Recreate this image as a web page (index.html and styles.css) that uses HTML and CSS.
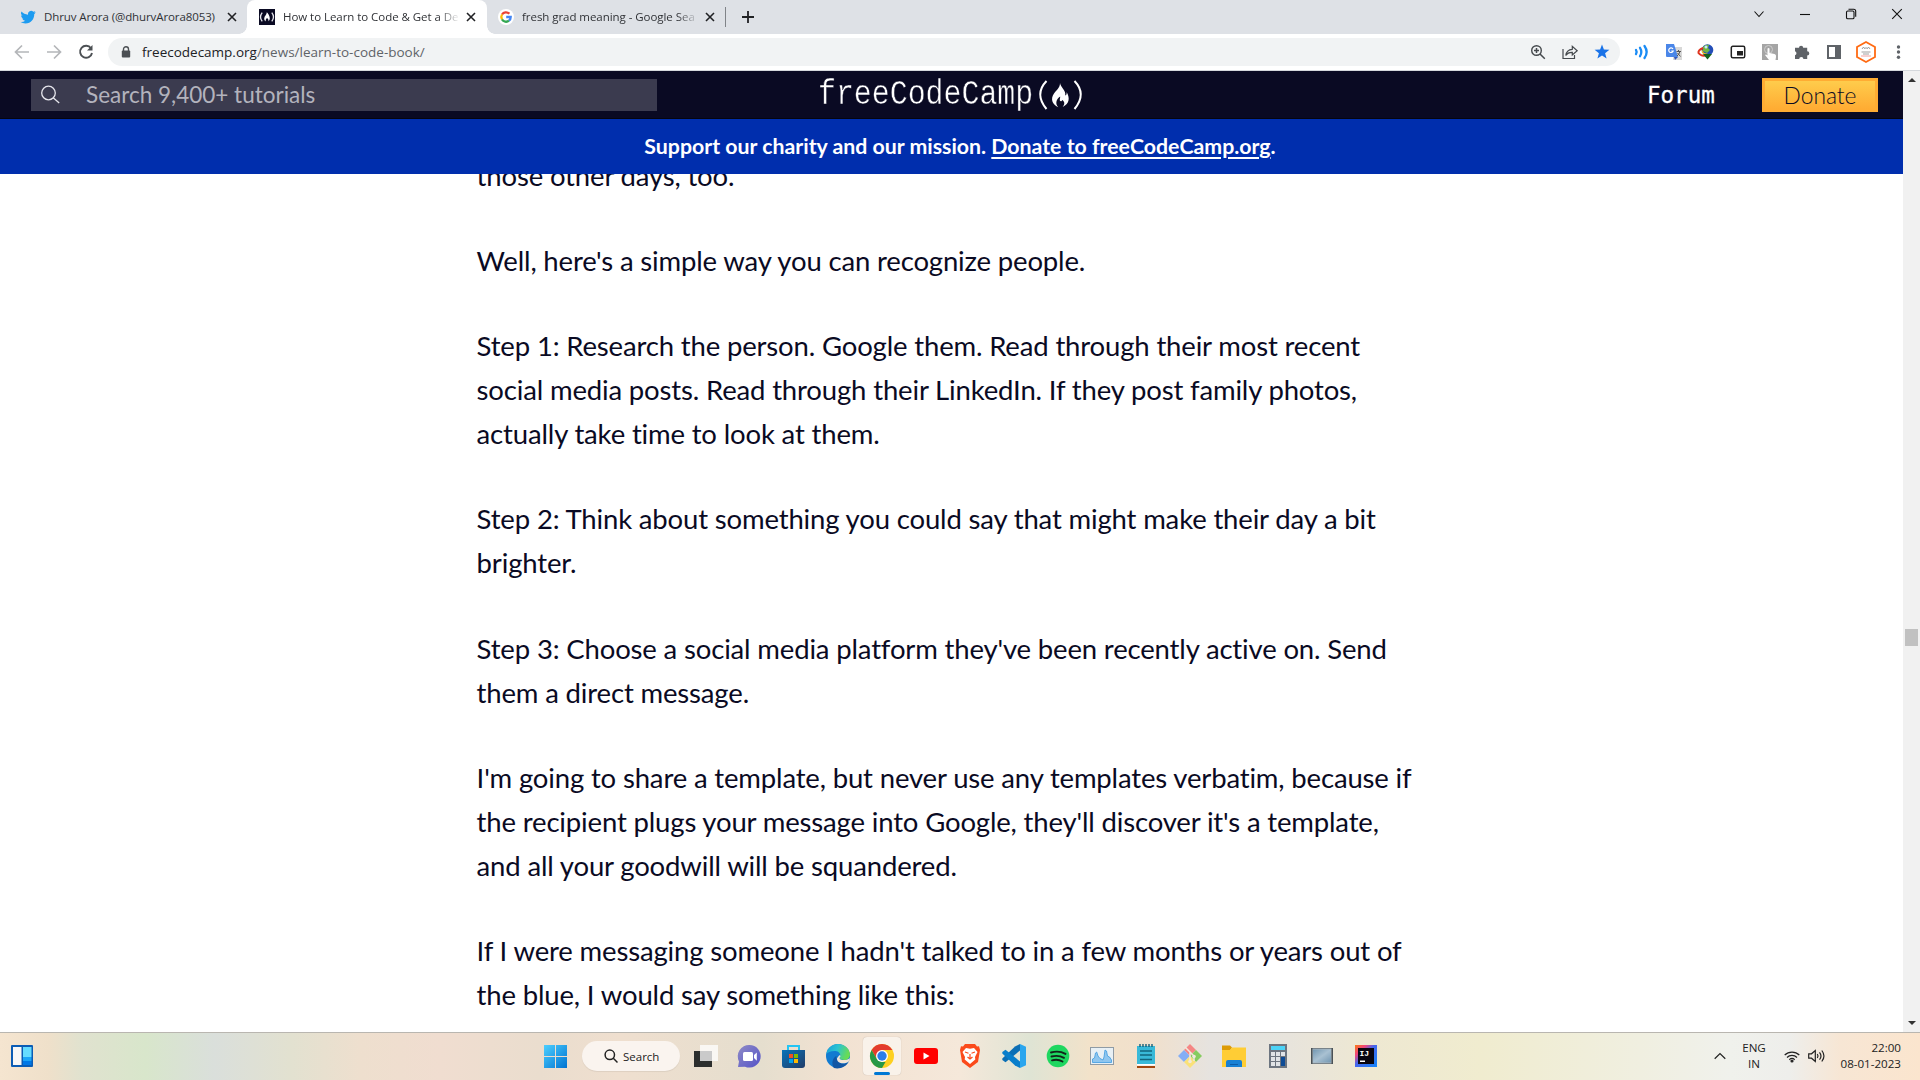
FILE: index.html
```html
<!DOCTYPE html>
<html lang="en">
<head>
<meta charset="utf-8">
<title>How to Learn to Code</title>
<link rel="stylesheet" href="styles.css">
</head>
<body>
<div class="tabstrip">
  <div class="tab tab-first">
    <svg class="fav" viewBox="0 0 24 24" fill="#1d9bf0"><path d="M23.6 4.9c-.8.4-1.7.6-2.7.8 1-.6 1.7-1.500 2.100-2.600-.9.500-1.900.9-3 1.100a4.700 4.700 0 0 0-8 4.300C8 8.300 4.700 6.500 2.300 3.800a4.700 4.700 0 0 0 1.500 6.300c-.8 0-1.500-.2-2.100-.6v.1c0 2.300 1.600 4.200 3.800 4.600-.7.2-1.400.2-2.100.1.600 1.900 2.300 3.200 4.400 3.300A9.500 9.500 0 0 1 .9 19.500c2.100 1.300 4.600 2.100 7.200 2.100 8.700 0 13.500-7.200 13.200-13.900.9-.7 1.700-1.600 2.300-2.800z"/></svg>
    <span class="tab-title t1">Dhruv Arora (@dhurvArora8053)</span>
    <svg class="x" viewBox="0 0 10 10"><path d="M1 1l8 8M9 1l-8 8"/></svg>
  </div>
  <div class="tab tab-active">
    <svg class="fav" viewBox="0 0 16 16"><path fill="#0a0a23" d="M0 0h16v16H0z"/><g fill="none" stroke="#e8e8ee" stroke-width="1.300"><path d="M3.200 3.600c-2 2.600-2 6.200 0 8.800M12.800 3.600c2 2.600 2 6.200 0 8.800"/></g><path fill="#fff" d="M7.800 3.300c1.200 1.200 3 3.500 3 6 0 1.400-.6 2.400-1.400 3 .4-1.500-.1-2.500-1.400-3.300-.9.900-1.700 1.800-1.200 3.300-1-.6-1.600-1.500-1.600-2.900 0-2.400 2.600-3.400 2.600-6.100z"/></svg>
    <span class="tab-title t2">How to Learn to Code &amp; Get a De</span>
    <svg class="x" viewBox="0 0 10 10"><path d="M1 1l8 8M9 1l-8 8"/></svg>
  </div>
  <div class="tab tab-last">
    <svg class="fav" viewBox="0 0 16 16"><circle cx="8" cy="8" r="8" fill="#fff"/><g fill="none" stroke-width="2.300"><path stroke="#ea4335" d="M4 5.500A4.700 4.700 0 0 1 11.300 4.700"/><path stroke="#fbbc05" d="M4 10.400a4.800 4.800 0 0 1 0-4.900"/><path stroke="#34a853" d="M4 10.400a4.700 4.700 0 0 0 7 1.300"/><path stroke="#4285f4" d="M8.200 8h4.500c0 1.600-.6 2.800-1.700 3.700"/></g></svg>
    <span class="tab-title t3">fresh grad meaning - Google Sea</span>
    <svg class="x" viewBox="0 0 10 10"><path d="M1 1l8 8M9 1l-8 8"/></svg>
  </div>
  <span class="tab-sep"></span>
  <svg class="newtab" viewBox="0 0 12 12"><path d="M6 0v12M0 6h12"/></svg>
  <div class="wincontrols">
    <svg viewBox="0 0 12 12"><path d="M1.500 3.500L6 8.500l4.500-5"/></svg>
    <svg viewBox="0 0 12 12"><path d="M1 6.500h10"/></svg>
    <svg viewBox="0 0 12 12"><rect x="1.500" y="3" width="7.500" height="7.800" rx="1.300"/><path d="M3.500 1.300h5.200a2 2 0 0 1 2 2v5.400"/></svg>
    <svg viewBox="0 0 12 12"><path d="M1.200 1.200l9.600 9.600M10.800 1.200l-9.600 9.600"/></svg>
  </div>
</div>

<div class="toolbar">
  <div class="nav">
    <svg viewBox="0 0 16 16" class="dim"><path d="M15 8H2M8 1.500L1.500 8 8 14.500"/></svg>
    <svg viewBox="0 0 16 16" class="dim"><path d="M1 8h13M8 1.500L14.500 8 8 14.500"/></svg>
    <svg viewBox="0 0 16 16" class="reload"><path d="M13 4.300A6 6 0 1 0 14 9"/><path d="M14.500 1v5.500H9z" class="tip"/></svg>
  </div>
  <div class="omnibox">
    <svg class="lock" viewBox="0 0 10 12"><path d="M2.500 5V3.200a2.500 2.500 0 0 1 5 0V5" fill="none" stroke="#4c5054" stroke-width="1.400"/><rect x=".8" y="4.500" width="8.400" height="7" rx="1" fill="#4c5054"/></svg>
    <span class="url"><b>freecodecamp.org</b>/news/learn-to-code-book/</span>
    <div class="omni-icons">
      <svg viewBox="0 0 16 16"><circle cx="6.500" cy="6.500" r="4.800"/><path d="M10 10l4.800 4.800M4 6.500h5M6.500 4v5" stroke-width="1.500"/></svg>
      <svg viewBox="0 0 16 16"><path d="M1 5v9.500h11.500V11M10.300 5.300V2.300L15.200 6.800 10.300 11V8.300C7 8.200 5 9.500 3.800 11.500 4.200 8 6.300 5.600 10.300 5.300z" stroke-width="1.200"/></svg>
      <svg viewBox="0 0 16 16"><path fill="#1a73e8" stroke="none" d="M8 .5l1.900 5.100 5.500.2-4.300 3.400 1.500 5.400L8 11.500l-4.600 3.100 1.500-5.400L.6 5.800l5.500-.2z"/></svg>
    </div>
  </div>
  <div class="ext">
    <svg viewBox="0 0 16 16" fill="none" stroke="#1a8cf5" stroke-width="2.300" stroke-linecap="round"><path d="M2 6q1.300 2 0 4M6 3.800q2.600 4.200 0 8.400M10.500 2q4.300 6 0 12"/></svg>
    <svg viewBox="0 0 16 16"><path fill="#d8d8d8" d="M7 3h9v13H7z"/><path fill="#4a86e8" d="M0 0h8l4 13H1a1 1 0 0 1-1-1z"/><path fill="#3456b5" d="M8 13h4l-3 3z"/><path d="M7 5A2.300 2.300 0 1 0 7.200 7H5.300" fill="none" stroke="#fff" stroke-width="1.200"/><path d="M10.500 7.500H15M12.500 6v1.500M14 7.500q-1 3-3 4.500M11.500 9l3 3.500" fill="none" stroke="#555" stroke-width="1"/></svg>
    <svg viewBox="0 0 16 16"><circle cx="9.500" cy="6" r="5.800" fill="#244eb8"/><path fill="#72b844" d="M5 3q3-3 6-2l-1 3 2 2-3 3-4-2z"/><circle cx="8" cy="3" r="1.500" fill="#c9e8ff"/><path d="M5 4Q0 6 .5 9q3 4 9 2" fill="none" stroke="#df351f" stroke-width="2"/><path d="M4.500 6.500q-1 3 5 4" fill="none" stroke="#f2c21a" stroke-width="1.500"/><path fill="#15631d" d="M5 10h9l-4.500 5.500z"/></svg>
    <svg viewBox="0 0 16 16"><rect x="1.300" y="2.300" width="13.400" height="11.400" rx="1.500" fill="none" stroke="#222" stroke-width="1.500"/><path fill="#222" d="M7 7h6v4.500H7z"/></svg>
    <svg viewBox="0 0 16 16"><path fill="#a5a5a5" d="M0 0h16v16H0z"/><circle cx="6.500" cy="5.500" r="4" fill="none" stroke="#ccc"/><path fill="#fff" d="M5.500 4.500q1.200-1 2 0V9l5 1q2 .4 1.500 3l-.5 3H7l-4-5q1-1 2.500.5z"/></svg>
    <svg viewBox="0 0 16 16" fill="#5f6368"><path d="M1 3.800h4a2.100 2.100 0 1 1 4.200 0h4v3.500a2.100 2.100 0 1 1 0 4.200V15H9.400a2.100 2.100 0 0 0-4.200 0H1v-3.700a2.100 2.100 0 0 0 0-4z"/></svg>
    <svg viewBox="0 0 16 16"><path fill="#5f6368" fill-rule="evenodd" d="M1 1h14v14H1zM3 3v10h6V3z"/></svg>
    <svg class="avatar" viewBox="0 0 22 22"><circle cx="11" cy="11" r="9" fill="#fff"/><path d="M11 1l9 5v10l-9 5-9-5V6z" fill="none" stroke="#ff6b13" stroke-width="1.800"/><path d="M7 8l1.500-2L10 8m1-2v2m1 0l1.500-2L15 8M6.500 11h9M8 13h6" fill="none" stroke="#888" stroke-width=".8"/><path d="M6 15h10" stroke="#e88" stroke-width=".8"/></svg>
    <svg viewBox="0 0 16 16" fill="#5f6368"><circle cx="8.500" cy="3" r="1.700"/><circle cx="8.500" cy="8" r="1.700"/><circle cx="8.500" cy="13.300" r="1.700"/></svg>
  </div>
</div>

<div class="viewport">
  <div class="page">
    <header class="site-header">
      <div class="search">
        <svg viewBox="0 0 20 20"><circle cx="8.500" cy="8" r="6.800"/><path d="M13.200 12.800l6 5.200"/></svg>
        <span>Search 9,400+ tutorials</span>
      </div>
      <div class="logo">
        <span class="logo-text">freeCodeCamp</span>
        <svg viewBox="0 0 46 32"><g fill="none" stroke="#fff" stroke-width="2"><path d="M8.500 2q-12.500 13 0 28M36.500 2q12.500 13 0 28"/></g><path fill="#fff" d="M22 4c.5 4.500 6.300 7.200 5.200 12.500 1.500-.6 1.700-2 1.300-3.500 3.500 5.500 3.300 11.500-3.800 15 2.600-3.300 1.700-5.600-.5-7-.4 1.200-1.300 1.700-2.300.8-.4-1.700.4-2.600.3-4.200-4 2.500-5.200 7.400-2 10.600C14 25 12.300 20 16 14.500 18.500 11 22 9 22 4z"/></svg>
      </div>
      <a class="forum">Forum</a>
      <a class="donate">Donate</a>
    </header>
    <div class="banner"><span>Support our charity and our mission. <u>Donate to freeCodeCamp.org</u>.</span></div>
    <article class="post">
      <p>those other days, too.</p>
      <p>Well, here's a simple way you can recognize people.</p>
      <p>Step 1: Research the person. Google them. Read through their most recent<br>social media posts. Read through their LinkedIn. If they post family photos,<br>actually take time to look at them.</p>
      <p>Step 2: Think about something you could say that might make their day a bit<br>brighter.</p>
      <p>Step 3: Choose a social media platform they've been recently active on. Send<br>them a direct message.</p>
      <p>I'm going to share a template, but never use any templates verbatim, because if<br>the recipient plugs your message into Google, they'll discover it's a template,<br>and all your goodwill will be squandered.</p>
      <p>If I were messaging someone I hadn't talked to in a few months or years out of<br>the blue, I would say something like this:</p>
    </article>
  </div>
  <div class="scrollbar">
    <svg viewBox="0 0 8 4"><path d="M4 0l4 4H0z"/></svg>
    <span class="thumb"></span>
    <svg viewBox="0 0 8 4"><path d="M0 0h8L4 4z"/></svg>
  </div>
</div>

<div class="taskbar">
  <div class="cell widgets"><svg viewBox="0 0 22 22"><rect width="22" height="22" rx="1" fill="#0b5cb5"/><path fill="#f7f7f7" d="M2 2h8.500v18H2z"/><path fill="#66dcff" d="M12 2h8.500v10H12z"/><path fill="#1ba5f8" d="M12 12h8.500v4H12z"/><path fill="#0078e6" d="M12 16h8.500v4H12z"/></svg></div>
  <div class="apps">
    <div class="cell"><svg viewBox="0 0 24 24"><defs><linearGradient id="win" x2="1" y2="1"><stop stop-color="#4ccfff"/><stop offset="1" stop-color="#0073d1"/></linearGradient></defs><path fill="url(#win)" d="M0 1h11v11H0zm12 0h11v11H12zM0 13h11v11H0zm12 0h11v11H12z"/></svg></div>
    <div class="pill"><svg viewBox="0 0 14 14"><circle cx="5.800" cy="5.800" r="4.700"/><path d="M9.300 9.300l4.200 4.200"/></svg><span>Search</span></div>
    <div class="cell"><svg viewBox="0 0 24 24"><path fill="#2c2e2d" d="M0 7h18v16H0z"/><path fill="#fff" fill-opacity=".75" d="M6 1h18v16H6z"/></svg></div>
    <div class="cell"><svg viewBox="0 0 24 24"><defs><linearGradient id="chat" x2="1" y2="1"><stop stop-color="#8f8bc6"/><stop offset="1" stop-color="#5452c8"/></linearGradient></defs><path fill="url(#chat)" d="M11.500 1A11.300 11.300 0 1 1 7 22.700L0 23l1-5.500A11.300 11.300 0 0 1 11.500 1z"/><rect x="5" y="8" width="10" height="9" rx="1.500" fill="#fff"/><path fill="#fff" d="M16 11l2.800-2.500v8.200L16 14z"/></svg></div>
    <div class="cell"><svg viewBox="0 0 24 24"><defs><linearGradient id="store" x2="1" y2="1"><stop stop-color="#0873b9"/><stop offset="1" stop-color="#213c68"/></linearGradient></defs><path d="M6 7V2h11v5" fill="none" stroke="#24c5f4" stroke-width="2"/><path fill="url(#store)" d="M0 6h23v15q0 3-3 3H3q-3 0-3-3z"/><path fill="#f25022" d="M7 10h4v4H7z"/><path fill="#7fba00" d="M12 10h4v4h-4z"/><path fill="#00a4ef" d="M7 15h4v4H7z"/><path fill="#ffb900" d="M12 15h4v4h-4z"/></svg></div>
    <div class="cell"><svg viewBox="0 0 24 24"><defs><linearGradient id="edge" x2="1" y2=".3"><stop stop-color="#159ed9"/><stop offset=".5" stop-color="#2bc3d2"/><stop offset="1" stop-color="#68dc55"/></linearGradient></defs><circle cx="12" cy="12" r="12" fill="#127bd1"/><path fill="url(#edge)" d="M.3 10C1 4.500 6 0 12 0s12 4.800 12 10.500c0 3.500-2.500 5.500-5.500 5.500s-5-1-5-2 .8-1 .8-2.700C14.300 8.500 11.500 7 8.500 7 4.500 7 1.300 8.500.3 10z"/><path fill="#1256a4" d="M8 24C5 20 6.500 13.500 10.500 12c-1 5 4 8.500 9 7.500l3-1.500C20 22.500 14 25.500 8 24z"/><path fill="#f3e5d6" d="M13.300 11.200c2-.2 1.200 1.500.2 2.500-.3 2.500 6 3.500 10.500.5l-1.500 3.500c-5.500 3.500-12 1-11.500-3.500z"/></svg></div>
    <div class="cell active"><svg viewBox="0 0 24 24"><circle cx="12" cy="12" r="12" fill="#fdd021"/><path fill="#e33b2e" d="M1.600 6A12 12 0 0 1 22.400 6H12L6.800 15z"/><path fill="#279847" d="M1.600 6l5.200 9 5.200 3h3.500L12 24A12 12 0 0 1 1.600 6z"/><circle cx="12" cy="12" r="6" fill="#fff"/><circle cx="12" cy="12" r="4.700" fill="#2b7de9"/></svg></div>
    <div class="cell"><svg viewBox="0 0 24 24"><rect y="4" width="24" height="16" rx="3" fill="#f00"/><path fill="#fff" d="M9.500 8.500l6 3.500-6 3.500z"/></svg></div>
    <div class="cell"><svg viewBox="0 0 24 24"><path fill="#fb4a1b" d="M7 0h10l2 2.500 2-.3L22 6l-2 12-8 6-8-6L2 6l1-3.800 2 .3z"/><path fill="#fff" d="M8 4l4 .8L16 4l3.500 4-2.500 5 .3 2.500L12 20l-5.300-4.500L7 13 4.500 8z"/><path d="M7 8l3.500 1.200M17 8l-3.500 1.200M12 10v4M9.500 13l2.500 2 2.500-2" fill="none" stroke="#fb4a1b" stroke-width="1.200"/></svg></div>
    <div class="cell"><svg viewBox="0 0 24 24"><path fill="#0b6fb5" d="M18 0v6.500L3.500 18.300.3 16v-1.500L13 2.500z"/><path fill="#087ecb" d="M.3 8L3.500 5.700 18 17.500V24l-5-2.500L.3 9.500z"/><path fill="#2aa6ee" d="M18 0l6 2.800v18.400L18 24z"/></svg></div>
    <div class="cell"><svg viewBox="0 0 24 24"><circle cx="12" cy="12" r="11.300" fill="#1ed760"/><path d="M5 8.500q8-2.300 14.500 1.400M5.500 12.500q7-1.800 12.500 1.300M6 16.300q6-1.500 10.500 1.200" fill="none" stroke="#12241a" stroke-width="1.900" stroke-linecap="round"/></svg></div>
    <div class="cell"><svg viewBox="0 0 24 24"><rect x=".5" y="3.500" width="23" height="17" fill="#e8f0f5" stroke="#8f9ba5"/><path fill="#8fc6ef" stroke="#3d9be0" stroke-width=".8" d="M2.500 18.500V15l2-1 1-5 1.200-1L8 12l2 2.500L13 16l1-3 1-7 1.500 1 1 5 2 1 2 3v2.500z"/></svg></div>
    <div class="cell"><svg viewBox="0 0 24 24"><path fill="#39b9d8" d="M3 2h18v18H3z"/><path fill="#a3470f" d="M3 22h18v2H3z"/><path fill="#fff" d="M3 20h18v1.500H3z"/><path d="M6 7h12M6 11h12M6 15.500h12" stroke="#12657d" stroke-width="1.500"/><path d="M6 0v3M9 0v3M12 0v3M15 0v3M18 0v3" stroke="#155e78" stroke-width="1.400"/></svg></div>
    <div class="cell"><svg viewBox="0 0 24 24"><path fill="#f58684" d="M12 0l6 6-6 6-6-6z"/><path fill="#84aef5" d="M6 6l6 6-6 6-6-6z"/><path fill="#86cc60" d="M18 6l6 6-6 6-6-6z"/><path fill="#fae178" d="M12 12l6 6-6 6-6-6z"/><path d="M7 3l9 9v5M12 8v10" fill="none" stroke="#f1e8dd" stroke-width="1.500"/><circle cx="12" cy="17.500" r="1.800" fill="#f1e8dd"/><circle cx="16" cy="12.500" r="1.800" fill="#f1e8dd"/></svg></div>
    <div class="cell"><svg viewBox="0 0 24 24"><path fill="#dd9b05" d="M0 1.500h8l2 2-2 3H0z"/><path fill="#ffcd35" d="M0 6h8l2-2.500h14V23H0z"/><path fill="#1780d4" d="M4 23v-5q0-2 2-2h12q2 0 2 2v5z"/><path stroke="#0b5ca8" d="M8 20.500h8"/></svg></div>
    <div class="cell"><svg viewBox="0 0 24 24"><path fill="#6d7580" d="M3 0h18v24H3z"/><path fill="#4cd3f7" d="M5 2h14v4H5z"/><path fill="#e0e3e6" d="M5 8h4v4H5zm5 0h4v4h-4zm5 0h4v4h-4zM5 13h4v4H5zm5 0h4v4h-4zM5 18h4v4H5zm5 0h4v4h-4z"/><path fill="#0e4b95" d="M15 13h4v9h-4z"/></svg></div>
    <div class="cell"><svg viewBox="0 0 24 24"><defs><linearGradient id="scr" x2="1" y2="1"><stop stop-color="#7397b1"/><stop offset=".5" stop-color="#a9c1d2"/><stop offset="1" stop-color="#7497b2"/></linearGradient></defs><path fill="#4a5156" d="M1 4h22v16H1z"/><path fill="#a9b6bf" d="M2.500 4.500h19v15h-19z"/><path fill="url(#scr)" d="M3 5.500h18v13H3z"/></svg></div>
    <div class="cell"><svg viewBox="0 0 24 24"><defs><linearGradient id="ij" x2="1" y2="1"><stop stop-color="#f97a12"/><stop offset=".25" stop-color="#f0437c"/><stop offset=".45" stop-color="#4666ed"/><stop offset="1" stop-color="#1385fa"/></linearGradient></defs><path fill="url(#ij)" d="M1 1h22v22H1z"/><path fill="#080510" d="M4 4h16v16H4z"/><path fill="#fff" d="M6 16.500h5V18H6z"/><text x="5.500" y="12" class="ij">IJ</text></svg></div>
  </div>
  <div class="tray">
    <svg class="up" viewBox="0 0 12 8"><path d="M.7 6.700L6 1.500l5.300 5.200"/></svg>
    <div class="lang"><span>ENG</span><span>IN</span></div>
    <svg class="wifi" viewBox="0 0 16 13"><path d="M.7 5a10.500 10.500 0 0 1 14.600 0M3 7.500a7 7 0 0 1 10 0M5.300 9.700a4 4 0 0 1 5.400 0"/><circle cx="8" cy="11" r="1" fill="#222"/></svg>
    <svg class="vol" viewBox="0 0 17 14"><path d="M.7 4.800h2.800L7.300 1.500v11L3.500 9.200H.7zM9.300 5q1.500 2 0 4M11.500 3.300q3 3.700 0 7.400M13.800 1.500q4.300 5.500 0 11"/></svg>
    <div class="clock"><span>22:00</span><span>08-01-2023</span></div>
  </div>
</div>
</body>
</html>
```
FILE: styles.css
```css
* { box-sizing: border-box; }
body {
  margin: 0;
  width: 1920px;
  height: 1080px;
  overflow: hidden;
  display: flex;
  flex-direction: column;
  background: #fff;
  font-family: "Open Sans", "Noto Sans", sans-serif;
}
svg { display: block; flex: none; overflow: visible; }

/* Browser tabs */
.tabstrip { flex: none; height: 34px; display: flex; align-items: center; background: #dee1e6; }
.tab { display: flex; align-items: center; height: 34px; }
.tab-first { width: 247px; padding-left: 20px; }
.tab-active { width: 240px; padding-left: 12px; background: #fff; border-radius: 8px 8px 0 0; position: relative; }
.tab-active::before, .tab-active::after {
  content: ""; position: absolute; bottom: 0; width: 8px; height: 8px;
}
.tab-active::before { left: -8px; background: radial-gradient(circle at 0 0, #dee1e6 7.5px, #fff 8px); }
.tab-active::after { right: -8px; background: radial-gradient(circle at 100% 0, #dee1e6 7.5px, #fff 8px); }
.tab-last { width: 238px; padding-left: 11px; }
.fav { width: 16px; height: 16px; margin-right: 8px; }
.tab-title { width: 178px; white-space: nowrap; font-size: 11.500px; color: #303236; line-height: 20px; }
.t1 { letter-spacing: -.1px; width: 184px; }
.t2, .t3 { letter-spacing: -.05px; -webkit-mask-image: linear-gradient(90deg, #000 155px, transparent 177px); mask-image: linear-gradient(90deg, #000 155px, transparent 177px); }
.x { width: 10px; height: 10px; margin-left: 5px; fill: none; stroke: #202124; stroke-width: 1.600; }
.t1 + .x { margin-left: -1px; }
.tab-sep { width: 1px; height: 20px; background: #808388; }
.newtab { width: 12px; height: 12px; margin-left: 16px; fill: none; stroke: #202124; stroke-width: 1.800; }
.wincontrols { margin-left: auto; display: flex; gap: 34px; padding-right: 17px; margin-bottom: 6px; }
.wincontrols svg { width: 12px; height: 12px; fill: none; stroke: #111; stroke-width: 1.100; }

/* Address row */
.toolbar { flex: none; height: 37px; display: flex; align-items: center; border-bottom: 1px solid #d5d8dc; }
.nav { display: flex; gap: 16px; padding: 0 14px; width: 108px; }
.nav svg { width: 16px; height: 16px; fill: none; stroke: #4c5054; stroke-width: 1.900; }
.nav .dim { stroke: #b4b6b9; stroke-width: 1.700; }
.nav .tip { fill: #4c5054; stroke: none; }
.omnibox { width: 1512px; height: 28px; border-radius: 14px; background: #f1f3f4; display: flex; align-items: center; padding-left: 13px; }
.lock { width: 10px; height: 12px; margin-right: 11px; }
.url { font-size: 13.500px; color: #5f6368; line-height: 24px; white-space: nowrap; }
.url b { font-weight: 400; color: #202124; }
.omni-icons { margin-left: auto; display: flex; gap: 16px; padding-right: 10px; }
.omni-icons svg { width: 16px; height: 16px; fill: none; stroke: #45494d; stroke-width: 1.400; }
.ext { display: flex; align-items: center; gap: 16px; margin-left: 14px; }
.ext svg { width: 16px; height: 16px; }
.ext .avatar { width: 22px; height: 22px; margin: 0 -3px; }

/* Web page */
.viewport { flex: 1; min-height: 0; display: flex; overflow: hidden; }
.page { width: 1903px; overflow: hidden; font-family: Lato, sans-serif; color: #0a0a23; }
.site-header { height: 48px; background: #0a0a23; display: flex; align-items: center; padding-left: 31px; border-bottom: 1px solid #06060f; }
.search { width: 626px; height: 32px; background: #3b3b4f; display: flex; align-items: center; padding-left: 9px; color: #b3b3bd; font-size: 22.500px; line-height: 30px; }
.search svg { width: 20px; height: 20px; margin-right: 26px; fill: none; stroke: #e6e6ec; stroke-width: 1.300; }
.logo { margin-left: 161px; width: 270px; display: flex; align-items: center; color: #fff; }
.logo-text { font-family: "Liberation Mono", monospace; font-size: 29.900px; line-height: 34px; transform: scaleY(1.150); width: 216px; -webkit-text-stroke: .4px #0a0a23; }
.logo svg { width: 46px; height: 32px; margin-left: 4px; }
.forum { margin-left: 559px; width: 115px; color: #fff; font-family: "DejaVu Sans Mono", monospace; font-size: 22.500px; line-height: 30px; -webkit-text-stroke: .3px #fff; }
.donate { width: 116px; height: 34px; border: 3px solid #ffac33; background: linear-gradient(#fecc4c, #ffac33); text-align: center; font-size: 22.800px; font-weight: 300; line-height: 29px; color: #0a0a23; }
.banner { height: 55px; background: #002ead; color: #fff; display: flex; align-items: center; justify-content: center; padding: 0 0 2px 17px; font-size: 21.300px; font-weight: 700; line-height: 30px; white-space: pre; }
.banner u { text-decoration-thickness: 2px; text-underline-offset: 3px; }
.post { margin-top: -20.500px; padding-left: 476.600px; font-size: 27.500px; line-height: 44px; letter-spacing: -.155px; font-variant-ligatures: none; white-space: nowrap; position: relative; z-index: -1; }
.post p { margin: 0 0 41.250px; }
.scrollbar { width: 17px; background: #f1f1f1; display: flex; flex-direction: column; align-items: center; padding: 7px 0; }
.scrollbar svg { width: 8px; height: 4px; fill: #333; }
.thumb { width: 13px; height: 17px; margin: 547px 0 auto; background: #c1c1c1; }

/* Windows taskbar */
.taskbar {
  flex: none; height: 48px; border-top: 1px solid #b9b6b0; display: flex; align-items: center; padding-bottom: 1px; color: #222;
  background: linear-gradient(90deg, #f5e5d0 0, #efe0ca 48px, #e0e2cf 82px, #d8e6cb 145px, #dadfdb 215px, #e2e1d0 290px, #eedfce 360px, #f0ddd0 440px, #eaddce 540px, #efdfcf 620px, #e5dece 760px, #f2e2d2 840px, #f5e8da 960px, #dfe4d4 1030px, #f2e2ca 1090px, #f1e0cc 1150px, #e6e3df 1210px, #e8e4dc 1290px, #eee8d2 1370px, #f0eccf 1480px, #f0efe0 1640px, #f0f1ec 1730px, #eeeeeb 1790px, #f7e6d4 1840px, #fbe5ce 1920px);
}
.cell { width: 44px; height: 40px; display: flex; align-items: center; justify-content: center; }
.cell svg { width: 24px; height: 24px; }
.cell.widgets svg { width: 22px; height: 22px; }
.apps { display: flex; align-items: center; margin-left: 490px; }
.pill { width: 98px; height: 30px; margin: 0 4px; border-radius: 15px; background: #faf4ef; display: flex; align-items: center; padding-left: 22px; font-size: 11.500px; box-shadow: 0 1px 1px #00000012; }
.pill svg { width: 14px; height: 14px; margin-right: 5px; fill: none; stroke: #222; stroke-width: 1.500; }
.active { width: 38px; height: 38px; margin: 0 3px; background: #f9f2ea; border-radius: 4px; box-shadow: 0 0 1px #0004; position: relative; }
.active::after { content: ""; position: absolute; left: 11px; bottom: 0; width: 16px; height: 3px; border-radius: 2px; background: #0078d4; }
.ij { font: 700 8px "Liberation Mono", monospace; fill: #fff; }
.tray { margin-left: auto; display: flex; align-items: center; padding-right: 19px; font-size: 11.600px; line-height: 16px; }
.tray svg { fill: none; stroke: #222; stroke-width: 1.200; }
.up { width: 12px; height: 8px; }
.lang, .clock { display: flex; flex-direction: column; }
.lang { align-items: center; margin-left: 16px; width: 24px; }
.wifi { width: 16px; height: 13px; margin-left: 18px; }
.vol { width: 17px; height: 14px; margin-left: 8px; }
.clock { align-items: flex-end; width: 76px; }
```
